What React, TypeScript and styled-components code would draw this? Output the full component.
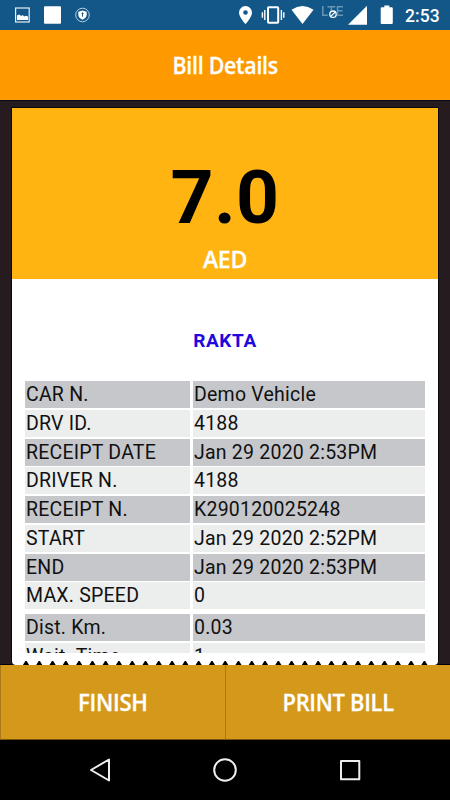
import React from "react";
import styled, { createGlobalStyle } from "styled-components";

const GlobalStyle = createGlobalStyle`
  * { box-sizing: border-box; }
  body { margin: 0; background: #000; font-family: Roboto, sans-serif; }
`;

const Screen = styled.div`
  width: 450px;
  height: 800px;
  display: flex;
  flex-direction: column;
  overflow: hidden;
  background: #000;
`;

const StatusBar = styled.header`
  height: 30px;
  flex: none;
  background: #135788;
  display: flex;
`;

const StatusIcons = styled.svg`
  display: block;
  width: 400px;
  height: 30px;
`;

const Clock = styled.time`
  width: 50px;
  padding-left: 5px;
  font: 500 17.5px/32px Roboto, sans-serif;
  letter-spacing: 0.1px;
  color: #fff;
`;

const Caption = styled.span<{ $squeeze: number }>`
  display: inline-block;
  white-space: nowrap;
  font: 600 24px/30px "Open Sans", "Noto Sans", sans-serif;
  color: #fff;
  -webkit-text-stroke: 0.3px #fff;
  letter-spacing: -0.3px;
  transform: scaleX(${(p) => p.$squeeze});
`;

const TitleBar = styled.div`
  height: 70px;
  flex: none;
  display: flex;
  align-items: center;
  justify-content: center;
  background: #ff9900;
`;

const Content = styled.main`
  height: 565px;
  flex: none;
  padding: 7px 12px 0;
  background: #261b1f;
  border-top: 1px solid #080a18;
  border-bottom: 1px solid #000010;
`;

const Receipt = styled.section`
  height: 557px;
  display: flex;
  flex-direction: column;
  background: #fff;
  border-radius: 0 0 4px 4px;
  box-shadow: 0 0 0 1px #0d080b;
`;

const Total = styled.div`
  height: 171px;
  flex: none;
  display: flex;
  flex-direction: column;
  align-items: center;
  background: #ffb412;
`;

const Amount = styled.div`
  margin-top: 44px;
  height: 92px;
  font: 700 75px/91px Roboto, sans-serif;
  letter-spacing: 0.4px;
  color: #000;
`;

const Company = styled.h2`
  margin: 47px 0 0;
  height: 28px;
  flex: none;
  font: 700 19px/29px Roboto, sans-serif;
  letter-spacing: 0.6px;
  text-align: center;
  color: #2009dd;
`;

const Details = styled.div`
  margin: 27px 12.5px 0 13px;
  height: 272px;
  flex: none;
  overflow: hidden;
`;

const Row = styled.div<{ $dark: boolean; $spaced?: boolean }>`
  display: grid;
  grid-template-columns: 165px 232px;
  column-gap: 3px;
  height: 26px;
  margin-bottom: 2.75px;
  margin-top: ${(p) => (p.$spaced ? "5.7px" : "0")};
  --cell: ${(p) => (p.$dark ? "#c6c7cb" : "#eceded")};
`;

const Cell = styled.div`
  padding-left: 1px;
  background: var(--cell);
  font: 400 19.5px/27px Roboto, sans-serif;
  letter-spacing: 0.22px;
  color: #111;
  white-space: nowrap;
`;

const Teeth = styled.svg`
  display: block;
  width: 426px;
  height: 5px;
  margin-top: auto;
  flex: none;
`;

const Actions = styled.div`
  height: 75px;
  flex: none;
  display: grid;
  grid-template-columns: 225px 225px;
`;

const Action = styled.button`
  display: flex;
  align-items: center;
  justify-content: center;
  padding: 0;
  border: 0;
  border-left: 1px solid #aa7917;
  border-bottom: 1px solid #76530f;
  background: #d4981b;
`;

const NavBar = styled.nav`
  height: 60px;
  flex: none;
  background: #000;
`;

const NavIcons = styled.svg`
  display: block;
`;

const records: [string, string][] = [
  ["CAR N.", "Demo Vehicle"],
  ["DRV ID.", "4188"],
  ["RECEIPT DATE", "Jan 29 2020 2:53PM"],
  ["DRIVER N.", "4188"],
  ["RECEIPT N.", "K290120025248"],
  ["START", "Jan 29 2020 2:52PM"],
  ["END", "Jan 29 2020 2:53PM"],
  ["MAX. SPEED", "0"],
  ["Dist. Km.", "0.03"],
  ["Wait. Time", "1"],
];

const teeth = Array.from({ length: 31 }, (_, i) => 14 + i * 13.28);

export default function App() {
  return (
    <>
      <GlobalStyle />
      <Screen>
        <StatusBar>
          <StatusIcons viewBox="0 0 400 30" fill="#fff">
            <rect x="15.6" y="8" width="13.6" height="14" fill="none" stroke="#e6eff5" strokeWidth="1.2" />
            <path d="M17 20v-4.500l2.200-1 2 1.500 1.500-1 1.400 1.600 1.900-.8 2 .8v3.400z" />
            <rect x="44" y="6.3" width="17" height="17.5" rx="1" />
            <circle cx="82.5" cy="15" r="6.8" fill="none" stroke="#b5cede" strokeWidth="1" />
            <path d="M82.500 10.500l4.200 1.300v3q0 3-4.200 5-4.200-2-4.200-5v-3z" />
            <path d="M82.500 12.500v4.200M81.500 13.400h2" fill="none" stroke="#135788" strokeWidth="1" />
            <path fillRule="evenodd" d="M245.5 6a6.5 6.5 0 0 0-6.5 6.5c0 4.8 6.5 11.6 6.5 11.6s6.5-6.8 6.5-11.6A6.5 6.5 0 0 0 245.5 6zm0 4.2a2.3 2.3 0 1 1 0 4.6 2.3 2.3 0 0 1 0-4.6z" />
            <rect x="268" y="7.2" width="10.2" height="15.6" rx=".7" fill="none" stroke="#fff" strokeWidth="2" />
            <path d="M264.8 10v10M281.4 10v10M262.4 12.3v5.4M283.8 12.3v5.4" stroke="#fff" strokeWidth="1.4" />
            <path d="M291.500 9.800q11-7.400 22 0L302.500 24z" />
            <path d="M322.800 6v9.300h4.900M327.500 6.800h7.800M331.400 7v5M343 6.800h-5.500v8.500h5.500M337.500 10.800h5" fill="none" stroke="#6797b7" strokeWidth="1.500" />
            <circle cx="333" cy="14.200" r="4.300" fill="#135788" />
            <circle cx="333" cy="14.200" r="3.200" fill="none" stroke="#fff" strokeWidth="1.300" />
            <path d="M330.800 16.400l4.400-4.400" stroke="#fff" strokeWidth="1.200" />
            <path d="M367 5.700v19h-19z" />
            <path d="M384.300 5.500h5v1.800h2.300q1.200 0 1.200 1.200v14.600q0 1-1.200 1h-9.700q-1.200 0-1.200-1V8.500q0-1.200 1.200-1.200h2.400z" />
          </StatusIcons>
          <Clock>2:53</Clock>
        </StatusBar>
        <TitleBar>
          <Caption as="h1" $squeeze={0.89}>Bill Details</Caption>
        </TitleBar>
        <Content>
          <Receipt>
            <Total>
              <Amount>7.0</Amount>
              <Caption $squeeze={0.96}>AED</Caption>
            </Total>
            <Company>RAKTA</Company>
            <Details>
              {records.map(([label, value], i) => (
                <Row key={label} $dark={i % 2 === 0} $spaced={i === 8}>
                  <Cell>{label}</Cell>
                  <Cell>{value}</Cell>
                </Row>
              ))}
            </Details>
            <Teeth viewBox="0 0 426 5">
              {teeth.map((x) => (
                <path key={x} d={`M${x - 3.1} 5L${x - 0.6} 1h1.2L${x + 3.1} 5z`} />
              ))}
            </Teeth>
          </Receipt>
        </Content>
        <Actions>
          <Action><Caption $squeeze={0.92}>FINISH</Caption></Action>
          <Action><Caption $squeeze={0.91}>PRINT BILL</Caption></Action>
        </Actions>
        <NavBar>
          <NavIcons width="450" height="60" fill="none" stroke="#eee" strokeWidth="2" strokeLinejoin="round">
            <path d="M109 19.5v21L91 30z" />
            <circle cx="225" cy="30" r="10.8" />
            <rect x="341" y="21" width="18.3" height="18.3" />
          </NavIcons>
        </NavBar>
      </Screen>
    </>
  );
}
